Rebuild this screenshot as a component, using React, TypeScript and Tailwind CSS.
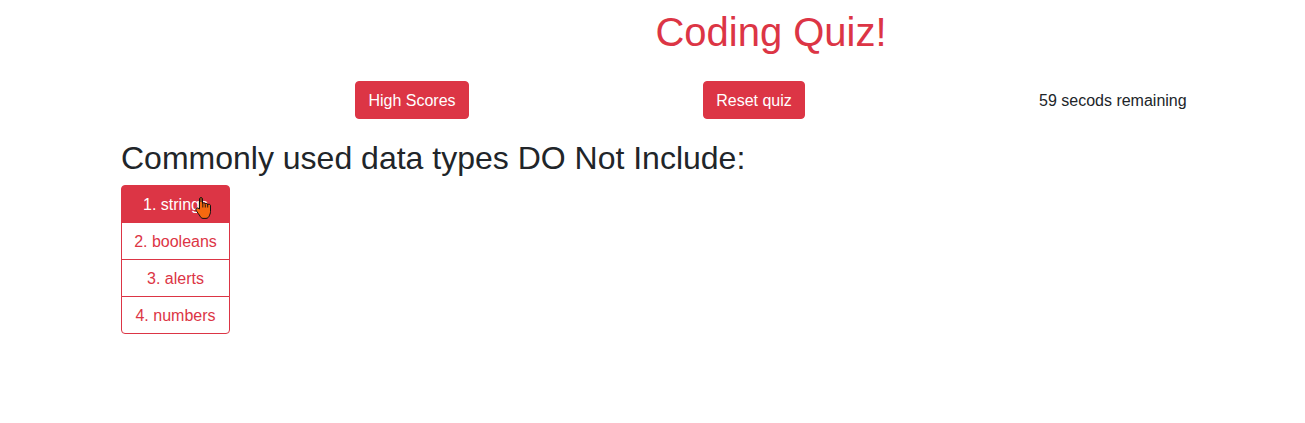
function HandCursor() {
  return (
    <svg
      className="absolute left-[195px] top-[197px]"
      width="18"
      height="22"
      viewBox="0 0 18 22"
    >
      <path
        d="M4.5 12V2c0-1.9 3-1.9 3 0v4.6c0-1 2.6-1 2.6 0v.6c0-1 2.4-1 2.4 0v.8c0-1 3-1 3 .4v6c0 2.2-.8 3.2-1.2 4.4-.4 1-1.4 2.6-3.3 2.6H8c-1.6 0-2.4-1.2-3-2.4-.8-1.5-2.6-3.4-3.8-5.4-.8-1.4.2-3.2 1.7-2.6z"
        fill="#f5680f"
        stroke="#111"
        strokeWidth="1"
        strokeLinejoin="round"
      />
      <path d="M6 1.5v3.5" stroke="#3a2a24" strokeWidth="1.2" />
      <path d="M7.8 7v3.5M10.3 7.5v3M12.7 8v2.5" stroke="#111" strokeWidth="0.9" />
    </svg>
  );
}

export default function App() {
  const answers = ["1. strings", "2. booleans", "3. alerts", "4. numbers"];

  return (
    <div className="relative h-[423px] bg-white font-['Liberation_Sans',Arial,sans-serif] text-[#212529]">
      {/* Title */}
      <div className="flex justify-center pl-[237px] pt-2">
        <h1 className="text-[40px] leading-[48px] font-normal text-[#dc3545]">
          Coding Quiz!
        </h1>
      </div>

      {/* Controls */}
      <div className="mt-[25px] flex items-center gap-[234px] pl-[355px]">
        <button className="h-[38px] w-[114px] rounded border border-[#dc3545] bg-[#dc3545] pt-0.5 text-base text-white">
          High Scores
        </button>
        <button className="h-[38px] w-[102px] rounded border border-[#dc3545] bg-[#dc3545] pt-0.5 text-base text-white">
          Reset quiz
        </button>
        <span className="pt-0.5 text-base">59 secods remaining</span>
      </div>

      {/* Question */}
      <div className="pl-[121px] pt-5">
        <h2 className="mb-2 text-[32px] leading-[38px] font-normal">
          Commonly used data types DO Not Include:
        </h2>
        <div className="flex w-[109px] flex-col">
          {answers.map((answer, i) => (
            <button
              key={answer}
              className={
                i === 0
                  ? "-mt-px h-[38px] rounded-t border border-[#dc3545] bg-[#dc3545] pt-0.5 text-base text-white first:mt-0"
                  : i === 3
                    ? "-mt-px h-[38px] rounded-b border border-[#dc3545] bg-white pt-0.5 text-base text-[#dc3545]"
                    : "-mt-px h-[38px] border border-[#dc3545] bg-white pt-0.5 text-base text-[#dc3545]"
              }
            >
              {answer}
            </button>
          ))}
        </div>
      </div>

      <HandCursor />
    </div>
  );
}
